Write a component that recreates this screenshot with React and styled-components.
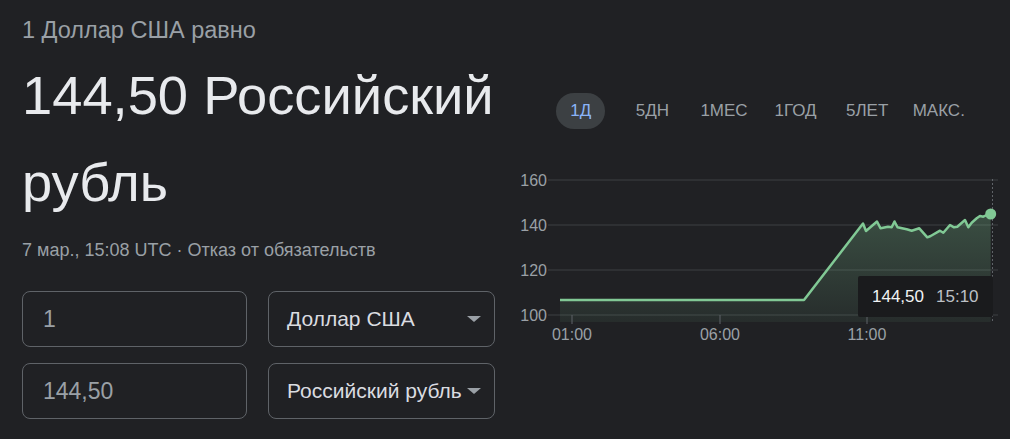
import React from "react";
import styled, { createGlobalStyle } from "styled-components";

const GlobalStyle = createGlobalStyle`
  html, body {
    margin: 0;
    padding: 0;
    background: #202124;
  }
  body {
    font-family: "Liberation Sans", Arial, sans-serif;
  }
`;

const Page = styled.div`
  width: 1010px;
  height: 439px;
  box-sizing: border-box;
  padding-left: 22px;
  display: flex;
  background: #202124;
  overflow: hidden;
`;

const LeftColumn = styled.div`
  width: 473px;
  display: flex;
  flex-direction: column;
`;

const RightColumn = styled.div`
  width: 510px;
  margin-left: 5px;
  display: flex;
  flex-direction: column;
`;

const Headline = styled.div`
  margin-top: 17px;
  font-size: 23.5px;
  line-height: 27px;
  color: #9aa0a6;
`;

const Result = styled.div`
  margin-top: 8px;
  font-size: 54.3px;
  line-height: 87px;
  color: #e8eaed;
  white-space: nowrap;
`;

const Meta = styled.div`
  margin-top: 13px;
  font-size: 18px;
  line-height: 22px;
  color: #9aa0a6;
  white-space: nowrap;
`;

const Disclaimer = styled.span`
  color: #9aa0a6;
`;

const Converter = styled.div`
  margin-top: 30px;
  display: grid;
  grid-template-columns: 225px 227px;
  grid-auto-rows: 56px;
  column-gap: 21px;
  row-gap: 16px;
`;

const Field = styled.div`
  box-sizing: border-box;
  border: 1px solid #5f6368;
  border-radius: 8px;
  display: flex;
  align-items: center;
  padding: 0 13px 0 ${(p) => (p.$select ? 18 : 20)}px;
  font-size: ${(p) => (p.$select ? 21 : 23)}px;
  color: ${(p) => (p.$select ? "#dadce0" : "#9aa0a6")};
  white-space: nowrap;
`;

const FieldText = styled.span`
  flex: 1;
`;

const Caret = styled.span`
  flex-shrink: 0;
  width: 0;
  height: 0;
  margin-left: 3px;
  border-left: 7px solid transparent;
  border-right: 7px solid transparent;
  border-top: 6px solid #9aa0a6;
`;

const Tabs = styled.div`
  margin-top: 93px;
  padding-left: 45px;
  display: flex;
`;

const Tab = styled.div`
  width: 71.6px;
  height: 36px;
  display: flex;
  justify-content: center;
  align-items: center;
`;

const TabLabel = styled.span`
  height: 36px;
  line-height: 36px;
  padding: 0 14px;
  border-radius: 18px;
  font-size: 17px;
  background: ${(p) => (p.$active ? "#3c4043" : "transparent")};
  color: ${(p) => (p.$active ? "#8ab4f8" : "#9aa0a6")};
`;

const ChartWrap = styled.div`
  position: relative;
  margin-top: 36px;
  width: 510px;
  height: 180px;
`;

const Tooltip = styled.div`
  position: absolute;
  left: 358px;
  top: 111px;
  width: 135px;
  height: 41px;
  box-sizing: border-box;
  padding-left: 14px;
  display: flex;
  align-items: center;
  gap: 12px;
  background: #1a1b1d;
  border-radius: 2px;
  font-size: 17px;
`;

const TipValue = styled.span`
  color: #f1f3f4;
`;

const TipTime = styled.span`
  color: #bdc1c6;
`;

const tabs = ["1Д", "5ДН", "1МЕС", "1ГОД", "5ЛЕТ", "МАКС."];

const gridRows = [
  { label: "160", y: 180 },
  { label: "140", y: 225 },
  { label: "120", y: 270 },
  { label: "100", y: 315 },
];

const xTicks = [
  { label: "01:00", x: 572 },
  { label: "06:00", x: 720 },
  { label: "11:00", x: 867 },
];

const points = [
  [560, 300], [804, 300], [863, 223.5], [866, 231], [877, 221.5], [880.5, 228.3],
  [888, 226.7], [891.7, 227.3], [894.5, 221.5], [897.5, 227.3], [906.7, 229.3],
  [911.7, 230.7], [919.3, 228.3], [927.3, 237.3], [930.7, 236], [940, 230.7],
  [943.3, 232.7], [950, 225], [954, 227.3], [957.3, 226.7], [965, 220],
  [968.3, 227.3], [971.7, 222.7], [976.7, 218.3], [980, 216], [983.3, 216.7],
  [986.7, 215], [990.7, 214],
];

const linePath = points.map(([x, y], i) => `${i ? "L" : "M"}${x} ${y}`).join(" ");
const areaPath = `${linePath} L990.7 322 L560 322 Z`;

const Chart = () => (
  <svg width="510" height="180" viewBox="500 165 510 180">
    <defs>
      <linearGradient id="area" x1="0" y1="214" x2="0" y2="322" gradientUnits="userSpaceOnUse">
        <stop offset="0" stopColor="#81c995" stopOpacity="0.27" />
        <stop offset="1" stopColor="#81c995" stopOpacity="0.07" />
      </linearGradient>
    </defs>
    {gridRows.map((r) => (
      <g key={r.label}>
        <line x1="548" x2="998" y1={r.y} y2={r.y} stroke="#3c4043" strokeWidth="1" />
        <text
          x="547"
          y={r.y + 6}
          textAnchor="end"
          fontSize="16"
          fill="#9aa0a6"
          fontFamily="Liberation Sans, Arial, sans-serif"
        >
          {r.label}
        </text>
      </g>
    ))}
    <path d={areaPath} fill="url(#area)" />
    {xTicks.map((t) => (
      <g key={t.label}>
        <line x1={t.x} x2={t.x} y1="315" y2="324" stroke="#5f6368" strokeWidth="1" />
        <text
          x={t.x}
          y="340"
          textAnchor="middle"
          fontSize="16"
          fill="#9aa0a6"
          fontFamily="Liberation Sans, Arial, sans-serif"
        >
          {t.label}
        </text>
      </g>
    ))}
    <line x1="992.5" x2="992.5" y1="179" y2="322" stroke="#5f6368" strokeWidth="1" strokeDasharray="2 2" />
    <path d={linePath} fill="none" stroke="#81c995" strokeWidth="2.5" strokeLinejoin="round" />
    <circle cx="990.7" cy="214" r="5.5" fill="#81c995" />
  </svg>
);

const App = () => {
  return (
    <Page>
      <GlobalStyle />
      <LeftColumn>
        <Headline>1 Доллар США равно</Headline>
        <Result>
          144,50 Российский
          <br />
          рубль
        </Result>
        <Meta>
          7 мар., 15:08 UTC · <Disclaimer>Отказ от обязательств</Disclaimer>
        </Meta>
        <Converter>
          <Field>
            <FieldText>1</FieldText>
          </Field>
          <Field $select>
            <FieldText>Доллар США</FieldText>
            <Caret />
          </Field>
          <Field>
            <FieldText>144,50</FieldText>
          </Field>
          <Field $select>
            <FieldText>Российский рубль</FieldText>
            <Caret />
          </Field>
        </Converter>
      </LeftColumn>
      <RightColumn>
        <Tabs>
          {tabs.map((t, i) => (
            <Tab key={t}>
              <TabLabel $active={i === 0}>{t}</TabLabel>
            </Tab>
          ))}
        </Tabs>
        <ChartWrap>
          <Chart />
          <Tooltip>
            <TipValue>144,50</TipValue>
            <TipTime>15:10</TipTime>
          </Tooltip>
        </ChartWrap>
      </RightColumn>
    </Page>
  );
};

export default App;
